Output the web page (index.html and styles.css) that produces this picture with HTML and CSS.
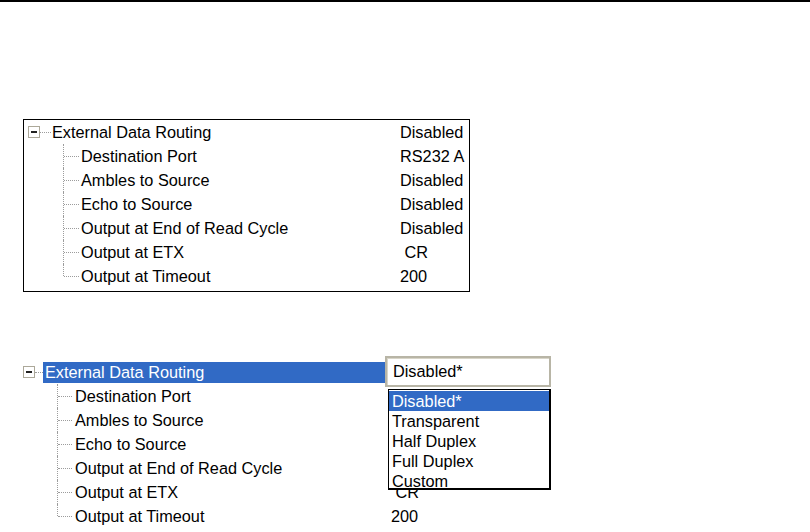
FILE: index.html
```html
<!DOCTYPE html>
<html>
<head>
<meta charset="utf-8">
<link rel="stylesheet" href="styles.css">
</head>
<body>
<div class="topline"></div>

<div class="panel">
  <div class="row">
    <div class="tree"><span class="exp"></span><span class="stub"></span><span class="label">External Data Routing</span></div>
    <div class="val">Disabled</div>
  </div>
  <div class="row">
    <div class="tree"><span class="twig"></span><span class="label">Destination Port</span></div>
    <div class="val">RS232 A</div>
  </div>
  <div class="row">
    <div class="tree"><span class="twig"></span><span class="label">Ambles to Source</span></div>
    <div class="val">Disabled</div>
  </div>
  <div class="row">
    <div class="tree"><span class="twig"></span><span class="label">Echo to Source</span></div>
    <div class="val">Disabled</div>
  </div>
  <div class="row">
    <div class="tree"><span class="twig"></span><span class="label">Output at End of Read Cycle</span></div>
    <div class="val">Disabled</div>
  </div>
  <div class="row">
    <div class="tree"><span class="twig"></span><span class="label">Output at ETX</span></div>
    <div class="val"> CR</div>
  </div>
  <div class="row">
    <div class="tree"><span class="twig last"></span><span class="label">Output at Timeout</span></div>
    <div class="val">200</div>
  </div>
</div>

<div class="grid2">
  <div class="row">
    <div class="tree"><span class="exp"></span><span class="stub"></span><span class="label sel">External Data Routing</span></div>
    <div class="val"></div>
  </div>
  <div class="row">
    <div class="tree"><span class="twig"></span><span class="label">Destination Port</span></div>
    <div class="val"></div>
  </div>
  <div class="row">
    <div class="tree"><span class="twig"></span><span class="label">Ambles to Source</span></div>
    <div class="val"></div>
  </div>
  <div class="row">
    <div class="tree"><span class="twig"></span><span class="label">Echo to Source</span></div>
    <div class="val"></div>
  </div>
  <div class="row">
    <div class="tree"><span class="twig"></span><span class="label">Output at End of Read Cycle</span></div>
    <div class="val"></div>
  </div>
  <div class="row">
    <div class="tree"><span class="twig"></span><span class="label">Output at ETX</span></div>
    <div class="val"> CR</div>
  </div>
  <div class="row">
    <div class="tree"><span class="twig last"></span><span class="label">Output at Timeout</span></div>
    <div class="val">200</div>
  </div>

  <div class="editor">Disabled*</div>
  <ul class="dropdown">
    <li class="hi">Disabled*</li>
    <li>Transparent</li>
    <li>Half Duplex</li>
    <li>Full Duplex</li>
    <li>Custom</li>
  </ul>
</div>
</body>
</html>
```

FILE: styles.css
```css
* { box-sizing: border-box; }

html, body {
  margin: 0;
  padding: 0;
  background: #fff;
}

body {
  width: 810px;
  height: 532px;
  overflow: hidden;
  font-family: "Liberation Sans", Arial, sans-serif;
  font-size: 16.3px;
  color: #000;
}

.topline {
  height: 2px;
  background: #000;
}

/* ---------- shared tree rows ---------- */
.row {
  display: flex;
  height: 24px;
  align-items: center;
}

.tree {
  display: flex;
  align-items: center;
  height: 100%;
  flex: none;
}

.val {
  white-space: pre;
  line-height: 24px;
}

.label {
  white-space: nowrap;
  padding-left: 2px;
}

.exp {
  width: 12px;
  height: 12px;
  border: 1px solid #aca899;
  background: #fff;
  position: relative;
  flex: none;
}

.exp::after {
  content: "";
  position: absolute;
  left: 2px;
  top: 4px;
  width: 6px;
  height: 2px;
  background: #222;
}

.stub {
  height: 1px;
  border-top: 1px dotted #9c9c9c;
  flex: none;
}

.twig {
  position: relative;
  height: 100%;
  flex: none;
}

.twig::before {
  content: "";
  position: absolute;
  left: 0;
  top: 0;
  bottom: 0;
  border-left: 1px dotted #9c9c9c;
}

.twig.last::before {
  bottom: 50%;
}

.twig::after {
  content: "";
  position: absolute;
  left: 1px;
  right: 1px;
  top: 50%;
  border-top: 1px dotted #9c9c9c;
}

/* ---------- first panel ---------- */
.panel {
  margin: 117px 0 0 23px;
  width: 447px;
  height: 173px;
  border: 1px solid #000;
  padding-top: 0;
}

.panel .tree { width: 376px; }
.panel .exp { margin-left: 4px; }
.panel .stub { width: 11px; }
.panel .twig { margin-left: 39px; width: 17px; }
.panel .label { padding-left: 1px; }

/* ---------- second grid ---------- */
.grid2 {
  position: relative;
  margin-top: 68px;
}

.grid2 .tree { width: 391px; }
.grid2 .exp { margin-left: 23px; }
.grid2 .stub { width: 8px; }
.grid2 .twig { margin-left: 57px; width: 16px; }

.grid2 .label.sel {
  background: #316ac5;
  color: #fff;
  width: 345px;
  height: 21px;
  line-height: 21px;
}

.editor {
  position: absolute;
  left: 385px;
  top: -4px;
  width: 166px;
  height: 31px;
  background: #fff;
  border: 2px solid #b8b5a6;
  box-shadow: inset 1px 1px 0 #d8d5c8;
  padding-left: 6px;
  line-height: 27px;
}

.dropdown {
  position: absolute;
  left: 388px;
  top: 29px;
  width: 163px;
  height: 101px;
  margin: 0;
  padding: 1px 0 0 0;
  list-style: none;
  background: #fff;
  border: 1px solid #000;
  border-right-width: 2px;
  border-bottom-width: 2px;
  overflow: hidden;
}

.dropdown li {
  height: 20px;
  line-height: 20px;
  padding-left: 3px;
  white-space: nowrap;
}

.dropdown li.hi {
  background: #316ac5;
  color: #fff;
}
```
